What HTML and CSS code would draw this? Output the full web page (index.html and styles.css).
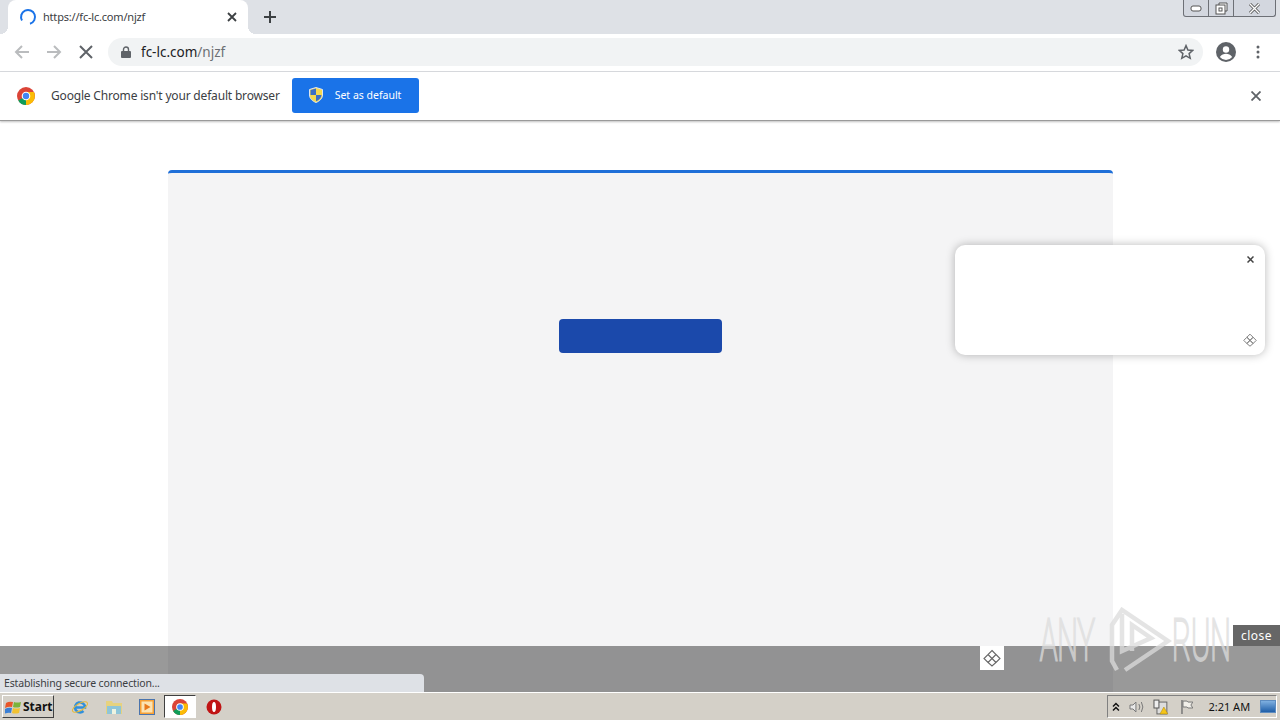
FILE: index.html
```html
<!DOCTYPE html>
<html lang="en">
<head>
    <meta charset="UTF-8">
    <title>https://fc-lc.com/njzf</title>
    <link rel="stylesheet" href="styles.css">
</head>
<body>
    <div class="tabstrip">
        <div class="tab">
            <svg class="spinner" width="18" height="18" viewBox="0 0 18 18"><path d="M3 12.500A7 7 0 1 1 11 15.700" fill="none" stroke="#1a73e8" stroke-width="2"/></svg>
            <span class="tab-title">https://fc-lc.com/njzf</span>
            <svg class="tab-close" width="10" height="10" viewBox="0 0 10 10"><path d="M1 1l8 8M9 1l-8 8" stroke="#3c4043" stroke-width="1.800"/></svg>
        </div>
        <svg class="new-tab" width="12" height="12" viewBox="0 0 12 12"><path d="M6 0v12M0 6h12" stroke="#3c4043" stroke-width="2"/></svg>
        <div class="window-btns">
            <div class="win-btn win-min"><svg width="12" height="7" viewBox="0 0 12 7"><rect x="1" y="1" width="10" height="5" rx="2" fill="#fff" stroke="#555"/></svg></div>
            <div class="win-btn win-max"><svg width="13" height="13" viewBox="0 0 13 13"><path d="M4 3V1h8v8h-2" fill="#fff" stroke="#555"/><rect x="1" y="3" width="9" height="9" fill="#fff" stroke="#555"/><rect x="4" y="6" width="3" height="3" fill="none" stroke="#555"/></svg></div>
            <div class="win-btn win-close"><svg width="13" height="11" viewBox="0 0 13 11"><path d="M2 1l9 9M11 1l-9 9" stroke="#555" stroke-width="3"/><path d="M2 1l9 9M11 1l-9 9" stroke="#fff" stroke-width="1.400"/></svg></div>
        </div>
    </div>

    <div class="toolbar">
        <svg class="nav-icon" width="16" height="16" viewBox="0 0 16 16"><path d="M15 8H2M8 2L2 8l6 6" fill="none" stroke="#babcbe" stroke-width="2"/></svg>
        <svg class="nav-icon" width="16" height="16" viewBox="0 0 16 16"><path d="M1 8h13M8 2l6 6-6 6" fill="none" stroke="#babcbe" stroke-width="2"/></svg>
        <svg class="nav-icon" width="16" height="16" viewBox="0 0 16 16"><path d="M2 2l12 12M14 2L2 14" fill="none" stroke="#5f6368" stroke-width="2"/></svg>
        <div class="omnibox">
            <svg width="10" height="12" viewBox="0 0 10 12"><rect y="5" width="10" height="7" rx="1" fill="#5f6368"/><path d="M2.500 5V3.500a2.500 2.500 0 0 1 5 0V5" fill="none" stroke="#5f6368" stroke-width="1.400"/></svg>
            <span class="url"><span class="url-host">fc-lc.com</span>/njzf</span>
            <svg class="star" width="16" height="16" viewBox="0 0 16 16"><path d="M8 1.600l1.900 4.400 4.800.4-3.600 3.200 1.100 4.700L8 11.800l-4.200 2.500 1.100-4.700-3.600-3.200 4.800-.4z" fill="none" stroke="#5f6368" stroke-width="1.500"/></svg>
        </div>
        <svg class="avatar" width="20" height="20" viewBox="0 0 20 20"><circle cx="10" cy="10" r="10" fill="#5f6368"/><circle cx="10" cy="7.500" r="3.200" fill="#fff"/><path d="M3.800 15c1.500-2.600 4-3.300 6.200-3.300s4.700.7 6.200 3.300A8 8 0 0 1 3.800 15z" fill="#fff"/></svg>
        <svg class="menu" width="4" height="14" viewBox="0 0 4 14"><circle cx="2" cy="2" r="1.500" fill="#5f6368"/><circle cx="2" cy="7" r="1.500" fill="#5f6368"/><circle cx="2" cy="12" r="1.500" fill="#5f6368"/></svg>
    </div>

    <div class="infobar">
        <svg width="18" height="18" viewBox="0 0 18 18"><circle cx="9" cy="9" r="9" fill="#db4437"/><path d="M9 9L1.200 13.500A9 9 0 0 0 9 18h.5z" fill="#0f9d58"/><path d="M9 5h7.900A9 9 0 0 1 9 18L9 9z" fill="#fbbc05"/><circle cx="9" cy="9" r="4.300" fill="#fff"/><circle cx="9" cy="9" r="3.200" fill="#4285f4"/></svg>
        <span class="infobar-text">Google Chrome isn't your default browser</span>
        <div class="default-btn">
            <svg width="14" height="16" viewBox="0 0 14 16"><path d="M7 .5L13.500 2.500V8c0 3.500-3 6.200-6.500 7.500C3.500 14.200.5 11.500.5 8V2.500z" fill="#f5d94e" stroke="#dfe6ee"/><path d="M7 1.500V8H1.500V3zM7 8h5.500c0 2.800-2.500 5-5.500 6.300z" fill="#3b6fc4"/></svg>
            <span>Set as default</span>
        </div>
        <svg class="infobar-close" width="10" height="10" viewBox="0 0 10 10"><path d="M.5.5l9 9M9.500.5l-9 9" stroke="#5f6368" stroke-width="1.800"/></svg>
    </div>

    <div class="page">
        <div class="card">
            <div class="card-button"></div>
        </div>
        <div class="popup">
            <svg class="popup-close" width="7" height="7" viewBox="0 0 7 7"><path d="M.5.5l6 6M6.500.5l-6 6" stroke="#444" stroke-width="1.500"/></svg>
            <svg class="popup-logo" width="14" height="14" viewBox="0 0 18 18"><path d="M9 1.500l4 4-4 4-4-4zM5 5.500l4 4-4 4-4-4zM13 5.500l4 4-4 4-4-4zM9 9.500l4 4-4 3.500-4-3.500z" fill="none" stroke="#777" stroke-width="1.200"/></svg>
        </div>
        <div class="ad-band">
            <div class="ad-logo"><svg width="18" height="18" viewBox="0 0 18 18"><path d="M9 1.500l4 4-4 4-4-4zM5 5.500l4 4-4 4-4-4zM13 5.500l4 4-4 4-4-4zM9 9.500l4 4-4 3.500-4-3.500z" fill="none" stroke="#666" stroke-width="1.100"/></svg></div>
            <div class="ad-close">close</div>
        </div>
        <div class="watermark">
            <span class="wm-text">ANY</span>
            <svg class="wm-play" width="66" height="66" viewBox="0 0 66 66"><path d="M11 63L6 54V18L16 3l46 31-43 29M16 7v37l29-13-19-13v26" fill="none" stroke="#dcdcdc" stroke-width="4.500"/></svg>
            <span class="wm-text">RUN</span>
        </div>
        <div class="status-bubble">Establishing secure connection...</div>
    </div>

    <div class="taskbar">
        <div class="start-btn">
            <svg width="17" height="16" viewBox="0 0 17 16"><path d="M1 4q3-2 7-1l-1 5q-3-1-7 1z" fill="#e8562a"/><path d="M9 3q3 1 7 0l-1 5q-4 1-7 0z" fill="#7bb33a"/><path d="M0 10q3-2 7-1l-1 5q-3-1-7 1z" fill="#3a7fd5"/><path d="M8 9q3 1 7 0l-1 5q-4 1-7 0z" fill="#f2c230"/></svg>
            <span>Start</span>
        </div>
        <div class="quick-launch">
            <svg width="18" height="18" viewBox="0 0 18 18"><path d="M4 9.500h10A5 5 0 1 0 12.500 13" fill="none" stroke="#2f8fdc" stroke-width="2.500"/><ellipse cx="9" cy="9" rx="8.500" ry="3.500" transform="rotate(-30 9 9)" fill="none" stroke="#e5b93c"/></svg>
            <svg width="18" height="16" viewBox="0 0 18 16"><path d="M1 2h6l1 2h9v11H1z" fill="#e7d27e"/><rect x="2" y="7" width="14" height="8" fill="#8fc5d8"/><rect x="7" y="10" width="4" height="5" fill="#eef3e0"/></svg>
            <svg width="16" height="16" viewBox="0 0 16 16"><rect x=".5" y=".5" width="15" height="15" fill="#f7a035" stroke="#4a74ad"/><rect x="2.500" y="2.500" width="11" height="11" fill="#fbe3b4"/><path d="M5.500 4.500l6 3.500-6 3.500z" fill="#e8791c"/></svg>
            <div class="chrome-task"><svg width="16" height="16" viewBox="0 0 18 18"><circle cx="9" cy="9" r="9" fill="#db4437"/><path d="M9 9L1.200 13.500A9 9 0 0 0 9 18h.5z" fill="#0f9d58"/><path d="M9 5h7.900A9 9 0 0 1 9 18L9 9z" fill="#fbbc05"/><circle cx="9" cy="9" r="4.300" fill="#fff"/><circle cx="9" cy="9" r="3.200" fill="#4285f4"/></svg></div>
            <svg width="16" height="16" viewBox="0 0 16 16"><circle cx="8" cy="8" r="7.500" fill="#c01414"/><ellipse cx="8" cy="8" rx="2" ry="5" fill="#fff"/></svg>
        </div>
        <div class="tray">
            <svg class="tray-arrows" width="8" height="10" viewBox="0 0 8 10"><path d="M1 4.500l3-3 3 3M1 8.500l3-3 3 3" fill="none" stroke="#111" stroke-width="1.500"/></svg>
            <svg class="tray-sound" width="16" height="16" viewBox="0 0 16 14"><path d="M1 5h3l3-3v10L4 9H1z" fill="#e8e8e8" stroke="#777"/><path d="M10 4q2 3 0 6M12.500 2q3 5 0 10" fill="none" stroke="#777"/></svg>
            <svg class="tray-net" width="16" height="16" viewBox="0 0 16 16"><rect x="4" y="3" width="10" height="12" fill="#ddd" stroke="#666"/><rect x="1" y="1" width="5" height="8" fill="#eee" stroke="#555"/><path d="M11 8l4 7H7z" fill="#f5c518" stroke="#a8830c" stroke-width=".5"/></svg>
            <svg class="tray-flag" width="14" height="16" viewBox="0 0 14 16"><path d="M2 1v14" stroke="#777" stroke-width="1.500"/><path d="M3 2h4l1 1h5l-2 3 2 3H8L7 8H3z" fill="#f1efe9" stroke="#777"/></svg>
            <span class="clock">2:21 AM</span>
            <div class="show-desktop"></div>
        </div>
    </div>
</body>
</html>
```

FILE: styles.css
```css
* {
    box-sizing: border-box;
}

html, body {
    margin: 0;
    height: 720px;
    overflow: hidden;
}

body {
    display: flex;
    flex-direction: column;
    background-color: #fff;
    font-family: "Noto Sans", sans-serif;
    color: #3c4043;
}

.tabstrip {
    height: 34px;
    background-color: #dee1e6;
    display: flex;
    align-items: flex-start;
    padding-left: 8px;
    position: relative;
    flex-shrink: 0;
}

.tab {
    width: 240px;
    height: 34px;
    background-color: #fff;
    border-radius: 8px 8px 0 0;
    display: flex;
    align-items: center;
    padding-left: 11px;
    padding-right: 11px;
    position: relative;
}

/* the flared bottom corners of the active tab */
.tab::before,
.tab::after {
    content: "";
    position: absolute;
    bottom: 0;
    width: 8px;
    height: 8px;
}

.tab::before {
    left: -8px;
    background: radial-gradient(circle at 0 0, transparent 8px, #fff 8px);
}

.tab::after {
    right: -8px;
    background: radial-gradient(circle at 100% 0, transparent 8px, #fff 8px);
}

.tab-title {
    font-size: 11px;
    letter-spacing: -0.2px;
    margin-left: 6px;
    margin-bottom: 1px;
    flex: 1;
}

.new-tab {
    margin: 11px 0 0 16px;
}

.window-btns {
    position: absolute;
    right: 4px;
    top: 0;
    height: 17px;
    display: flex;
    background-color: #d3d7df;
    border: 1px solid #6d7076;
    border-top: none;
    border-radius: 0 0 3px 3px;
}

.win-btn {
    display: flex;
    align-items: center;
    justify-content: center;
    border-right: 1px solid #6d7076;
}

.win-min {
    width: 25px;
}

.win-max {
    width: 25px;
}

.win-close {
    width: 41px;
    border-right: none;
}

.toolbar {
    height: 38px;
    background-color: #fff;
    border-bottom: 1px solid #dadce0;
    display: flex;
    align-items: center;
    padding-left: 14px;
    padding-bottom: 1px;
    flex-shrink: 0;
}

.nav-icon {
    margin-right: 16px;
}

.omnibox {
    width: 1095px;
    height: 28px;
    margin-left: -2px;
    background-color: #f1f3f4;
    border-radius: 14px;
    display: flex;
    align-items: center;
    padding-left: 13px;
    padding-right: 9px;
}

.url {
    font-size: 13.500px;
    color: #6b6f73;
    margin-left: 10px;
    flex: 1;
}

.url-host {
    color: #202124;
}

.avatar {
    margin-left: 13px;
}

.menu {
    margin-left: 20px;
}

.infobar {
    height: 49px;
    background-color: #fff;
    border-bottom: 1px solid #9a9a9a;
    box-shadow: 0 1px 2px rgba(0, 0, 0, 0.25);
    display: flex;
    align-items: center;
    padding-left: 17px;
    padding-bottom: 1px;
    position: relative;
    z-index: 2;
    flex-shrink: 0;
}

.infobar-text {
    font-size: 12px;
    letter-spacing: -0.18px;
    margin-left: 16px;
    margin-bottom: 1px;
}

.default-btn {
    width: 127px;
    height: 35px;
    margin-left: 12px;
    padding-bottom: 1px;
    background-color: #1a73e8;
    border-radius: 3px;
    color: #fff;
    font-size: 10.500px;
    display: flex;
    align-items: center;
    padding-left: 17px;
    gap: 12px;
}

.infobar-close {
    position: absolute;
    right: 19px;
    top: 19px;
}

.page {
    flex: 1;
    position: relative;
    padding: 49px 167px 0 168px;
    overflow: hidden;
}

.card {
    height: 560px;
    background-color: #f4f4f5;
    border-top: 3px solid #1f6fd8;
    border-radius: 4px 4px 0 0;
    display: flex;
    justify-content: center;
    padding-top: 146px;
}

.card-button {
    width: 163px;
    height: 34px;
    background-color: #1b49ab;
    border-radius: 4px;
}

.popup {
    position: absolute;
    left: 955px;
    top: 124px;
    width: 310px;
    height: 110px;
    background-color: #fff;
    border-radius: 10px;
    box-shadow: 0 0 10px rgba(0, 0, 0, 0.28);
}

.popup-close {
    position: absolute;
    right: 11px;
    top: 11px;
}

.popup-logo {
    position: absolute;
    right: 8px;
    bottom: 8px;
}

.ad-band {
    position: absolute;
    left: 0;
    right: 0;
    bottom: 0;
    height: 46px;
    background-color: rgba(0, 0, 0, 0.4);
}

.ad-logo {
    position: absolute;
    left: 980px;
    top: 0;
    width: 24px;
    height: 24px;
    background-color: #fff;
    display: flex;
    align-items: center;
    justify-content: center;
}

.ad-close {
    position: absolute;
    right: 0;
    top: -21px;
    width: 47px;
    height: 21px;
    background-color: #666;
    color: #fff;
    font-size: 12px;
    letter-spacing: 0.5px;
    text-align: center;
    line-height: 21px;
}

.watermark {
    position: absolute;
    left: 1040px;
    top: 486px;
    display: flex;
    align-items: center;
    opacity: 0.75;
}

.wm-text {
    font-family: "Roboto", sans-serif;
    font-weight: 100;
    font-size: 58px;
    line-height: 66px;
    width: 66px;
    display: inline-block;
    color: #dcdcdc;
    transform: scaleX(0.5);
    transform-origin: left center;
    white-space: nowrap;
    -webkit-text-stroke: 3px #dcdcdc;
}

.wm-play {
    flex-shrink: 0;
}

.status-bubble {
    position: absolute;
    left: 0;
    bottom: 0;
    width: 424px;
    height: 18px;
    background-color: #dee1e6;
    border-radius: 0 4px 0 0;
    font-size: 10.500px;
    letter-spacing: -0.15px;
    line-height: 18px;
    padding-left: 4px;
    color: #3c4043;
}

.taskbar {
    height: 28px;
    background-color: #d4d0c8;
    border-top: 1px solid #fff;
    display: flex;
    align-items: center;
    flex-shrink: 0;
}

.start-btn {
    width: 52px;
    height: 23px;
    margin-left: 2px;
    display: flex;
    align-items: center;
    gap: 1px;
    padding-left: 2px;
    border: 1px solid;
    border-color: #fff #404040 #404040 #fff;
    font-weight: 700;
    font-size: 12px;
    color: #111;
}

.quick-launch {
    display: flex;
    align-items: center;
    margin-left: 17px;
    gap: 16px;
}

.chrome-task {
    width: 32px;
    height: 23px;
    margin: 0 -6px 0 -7px;
    background-color: #fff;
    border: 1px solid;
    border-color: #404040 #fff #fff #404040;
    display: flex;
    align-items: center;
    justify-content: center;
}

.tray {
    margin-left: auto;
    margin-right: 3px;
    width: 170px;
    height: 23px;
    border: 1px solid;
    border-color: #808080 #fff #fff #808080;
    display: flex;
    align-items: center;
    padding-left: 4px;
}

.tray-sound {
    margin-left: 9px;
}

.tray-net {
    margin-left: 8px;
}

.tray-flag {
    margin-left: 11px;
}

.clock {
    font-size: 11px;
    color: #111;
    margin-left: 15px;
    white-space: nowrap;
}

.show-desktop {
    width: 16px;
    height: 13px;
    margin-left: 10px;
    background: linear-gradient(#7fb0e0, #1f5ea8);
    border: 1px solid #5d8cc0;
}
```
